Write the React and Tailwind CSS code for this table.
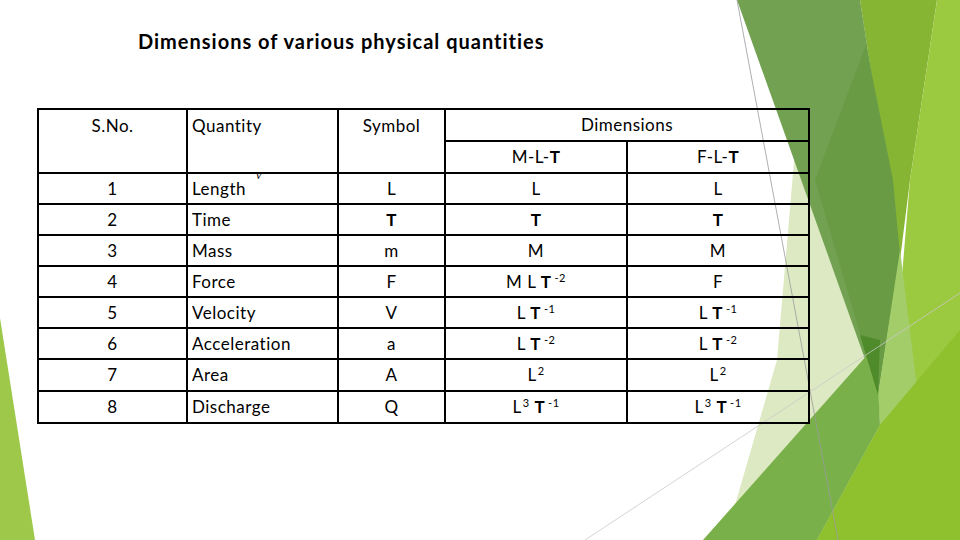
import React from 'react';

// Slide background: facet shapes on the right, sliver on the left
function Facets() {
  return (
    <svg className="absolute inset-0 pointer-events-none" width="960" height="540" viewBox="0 0 960 540">
      <polygon points="0,318 0,540 35,540" fill="#9dc84a" />
      <polygon points="795,150 872,350 735,505 777,360" fill="#dde9c2" />
      <polygon points="860,0 937,0 910,180 900,260" fill="#86b534" />
      <polygon points="737,0 860,0 900,255 878,395 860,345" fill="#72a251" />
      <polygon points="866,45 893,180 900,255 878,395 815,180" fill="#699b45" />
      <polygon points="937,0 960,0 960,540 817,540 880,425 900,300 910,180" fill="#9bc93f" />
      <polygon points="900,250 918,395 880,425 878,395" fill="#a3cd69" />
      <polygon points="703,540 876,345 880,425 817,540" fill="#79b049" />
      <polygon points="860,335 880,340 878,395" fill="#4f8b2b" />
      <polygon points="817,540 880,425 960,330 960,540" fill="#8fc02d" />
      <line x1="737" y1="0" x2="838" y2="540" stroke="#9a9a9a" strokeWidth="0.8" />
      <line x1="585" y1="540" x2="960" y2="293" stroke="#c9c9c9" strokeWidth="0.8" />
    </svg>
  );
}

const rows = [
  { n: '1', q: 'Length', s: 'L', mlt: <>L</>, flt: <>L</>, stray: true },
  { n: '2', q: 'Time', s: <b>T</b>, mlt: <b>T</b>, flt: <b>T</b> },
  { n: '3', q: 'Mass', s: 'm', mlt: <>M</>, flt: <>M</> },
  { n: '4', q: 'Force', s: 'F', mlt: <>M L <b>T</b><Sup>-2</Sup></>, flt: <>F</> },
  { n: '5', q: 'Velocity', s: 'V', mlt: <>L <b>T</b><Sup>-1</Sup></>, flt: <>L <b>T</b><Sup>-1</Sup></> },
  { n: '6', q: 'Acceleration', s: 'a', mlt: <>L <b>T</b><Sup>-2</Sup></>, flt: <>L <b>T</b><Sup>-2</Sup></> },
  { n: '7', q: 'Area', s: 'A', mlt: <>L<Sup tight>2</Sup></>, flt: <>L<Sup tight>2</Sup></>, tall: true },
  { n: '8', q: 'Discharge', s: 'Q', mlt: <>L<Sup tight>3</Sup> <b>T</b><Sup>-1</Sup></>, flt: <>L<Sup tight>3</Sup> <b>T</b><Sup>-1</Sup></>, tall: true },
];

function Sup({ children, tight }) {
  return (
    <span className={`relative -top-[6px] text-[11px] ${tight ? 'ml-[1px]' : 'ml-[3px]'}`}>{children}</span>
  );
}

export default function App() {
  const cell = 'border-2 border-black p-0';
  return (
    <div className="relative w-[960px] h-[540px] overflow-hidden bg-white text-black font-['Lato',sans-serif] [font-variant-ligatures:none]">
      <Facets />
      <div className="relative flex flex-col pt-[29px]">
        <div className="pl-[138px] h-[24px] leading-[24px] text-[20px] font-bold tracking-[1px]">
          Dimensions of various physical quantities
        </div>
        <table className="ml-[37px] mt-[55px] w-[771px] table-fixed border-collapse text-[17px] tracking-[0.5px]">
          <colgroup>
            <col className="w-[149px]" />
            <col className="w-[151px]" />
            <col className="w-[107px]" />
            <col className="w-[182px]" />
            <col className="w-[182px]" />
          </colgroup>
          <thead>
            <tr className="h-[32px]">
              <th rowSpan={2} className={`${cell} align-top pt-[3px] font-normal text-center`}>S.No.</th>
              <th rowSpan={2} className={`${cell} align-top pt-[3px] pl-[4px] font-normal text-left`}>Quantity</th>
              <th rowSpan={2} className={`${cell} align-top pt-[3px] font-normal text-center`}>Symbol</th>
              <th colSpan={2} className={`${cell} font-normal text-center`}>Dimensions</th>
            </tr>
            <tr className="h-[32px]">
              <th className={`${cell} font-normal text-center`}>M-L-<b>T</b></th>
              <th className={`${cell} font-normal text-center`}>F-L-<b>T</b></th>
            </tr>
          </thead>
          <tbody>
            {rows.map((r) => (
              <tr key={r.n} className={r.tall ? 'h-[32px]' : 'h-[31px]'}>
                <td className={`${cell} text-center`}>{r.n}</td>
                <td className={`${cell} pl-[4px]`}>
                  {r.q}
                  {r.stray && (
                    <span className="relative -top-[16px] ml-[10px] text-[12px] italic font-['Liberation_Serif',serif]">v</span>
                  )}
                </td>
                <td className={`${cell} text-center`}>{r.s}</td>
                <td className={`${cell} text-center`}>{r.mlt}</td>
                <td className={`${cell} text-center`}>{r.flt}</td>
              </tr>
            ))}
          </tbody>
        </table>
      </div>
    </div>
  );
}
